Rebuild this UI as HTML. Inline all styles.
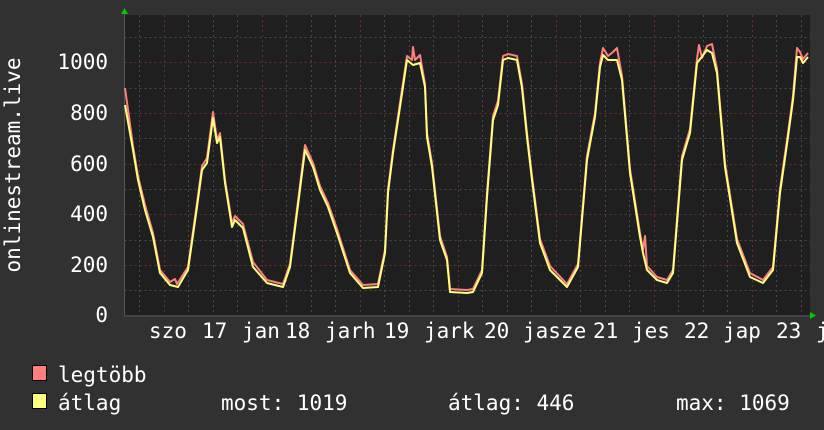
<!DOCTYPE html>
<html><head><meta charset="utf-8"><style>
html,body{margin:0;padding:0;background:#313131;}
svg{display:block}
text{font-family:"DejaVu Sans Mono","Liberation Mono",monospace;fill:#fff;font-size:21px}
</style></head><body>
<svg width="824" height="430" viewBox="0 0 824 430" xmlns="http://www.w3.org/2000/svg">
<rect width="824" height="430" fill="#313131"/>
<rect x="124" y="15" width="686" height="300" fill="#1f1f1f"/>
<g stroke="#4a4a4a" stroke-width="1" stroke-dasharray="2,3">
<path d="M124.5 37.5H810M124.5 88.5H810M124.5 138.5H810M124.5 189.5H810M124.5 240.5H810M124.5 290.5H810"/>
<path d="M139.5 15V315M188.5 15V315M213.5 15V315M237.5 15V315M286.5 15V315M311.5 15V315M335.5 15V315M384.5 15V315M409.5 15V315M433.5 15V315M482.5 15V315M507.5 15V315M531.5 15V315M580.5 15V315M605.5 15V315M629.5 15V315M678.5 15V315M703.5 15V315M727.5 15V315M776.5 15V315M801.5 15V315"/>
</g>
<g stroke="#6a3030" stroke-width="1" stroke-dasharray="2,3">
<path d="M124.5 62.5H810M124.5 113.5H810M124.5 164.5H810M124.5 214.5H810M124.5 265.5H810"/>
<path d="M164.5 15V315M262.5 15V315M360.5 15V315M458.5 15V315M556.5 15V315M654.5 15V315M752.5 15V315"/>
</g>
<path d="M124.5 12V316H812" fill="none" stroke="#555" stroke-width="1"/>
<path d="M121 14L124.5 8L128 14Z" fill="#0c0"/>
<path d="M810 312L816 315.5L810 319Z" fill="#0c0"/>
<polyline fill="none" stroke="#ff7f7f" stroke-width="2" stroke-linejoin="round" points="125,88 133,146 138,176 145,205 153,233 160,270 170,282 175,279 177,284 188,267 197,203 202,166 207,158 213,112 217,140 220,133 225,180 232,223 235,216 243,224 253,262 267,280 283,284 290,264 297,209 305,145 313,163 320,186 328,203 337,229 350,270 363,285 378,284 385,250 388,189 393,150 400,103 407,56 412,60 413,47 415,60 420,55 425,84 427,133 432,163 440,236 447,257 450,289 467,290 473,289 482,270 487,193 493,116 498,101 503,56 508,54 517,56 522,84 527,133 532,176 540,239 550,266 567,284 578,264 587,156 595,113 600,63 603,48 608,56 613,52 617,48 622,76 630,169 640,233 643,250 645,236 647,266 657,277 667,280 673,270 682,156 690,129 697,59 699,45 702,58 707,46 712,44 717,69 725,163 737,239 750,273 763,280 773,267 780,189 788,133 793,96 797,48 800,52 803,59 808,53"/>
<polyline fill="none" stroke="#ffff7f" stroke-width="2" stroke-linejoin="round" points="125,105 133,150 138,180 145,210 153,237 160,273 170,285 178,287 188,270 197,207 202,170 207,163 213,118 217,143 220,137 225,183 232,227 235,220 243,228 253,267 267,283 283,287 290,267 297,213 305,150 313,167 320,190 328,207 337,233 350,273 363,288 378,287 385,253 388,193 393,153 400,107 407,60 413,65 420,63 425,87 427,137 432,167 440,240 447,260 450,292 467,293 473,292 482,273 487,197 493,120 498,105 503,60 508,58 517,60 522,88 527,137 532,180 540,243 550,270 567,287 578,267 587,160 595,117 600,67 603,55 608,60 617,60 622,80 630,173 640,237 643,253 647,270 657,280 667,283 673,273 682,160 690,133 697,63 707,50 712,53 717,73 725,167 737,243 750,277 763,283 773,270 780,193 788,137 793,100 797,57 800,57 803,63 808,57"/>
<g text-anchor="end">
<text x="108" y="69">1000</text>
<text x="108" y="120">800</text>
<text x="108" y="171">600</text>
<text x="108" y="221">400</text>
<text x="108" y="272">200</text>
<text x="108" y="322">0</text>
</g>
<text transform="translate(20,165) rotate(-90)" text-anchor="middle">onlinestream.live</text>
<g>
<text x="149" y="338">szo</text>
<text x="202" y="338">17</text>
<text x="242" y="338">jan</text>
<text x="285" y="338">18</text>
<text x="325" y="338">jarh</text>
<text x="384" y="338">19</text>
<text x="424" y="338">jark</text>
<text x="484" y="338">20</text>
<text x="523" y="338">jasze</text>
<text x="593" y="338">21</text>
<text x="632" y="338">jes</text>
<text x="684" y="338">22</text>
<text x="723" y="338">jap</text>
<text x="776" y="338">23</text>
<text x="816" y="338">j</text>
</g>
<rect x="32.5" y="365.5" width="14" height="15" fill="#ff7f7f" stroke="#000" stroke-width="1"/>
<rect x="32.5" y="393.5" width="14" height="15" fill="#ffff7f" stroke="#000" stroke-width="1"/>
<text x="58" y="382">legtöbb</text>
<text x="58" y="410">átlag</text>
<text x="221" y="410">most: 1019</text>
<text x="448" y="410">átlag: 446</text>
<text x="676" y="410">max: 1069</text>
</svg>
</body></html>
